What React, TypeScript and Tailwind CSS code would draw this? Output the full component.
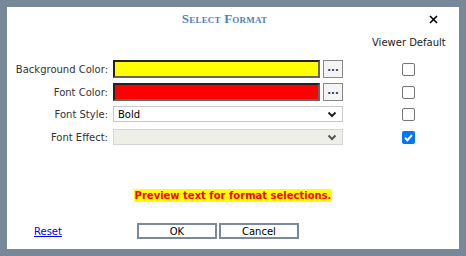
import React from "react";

const Chevron = ({ color }: { color: string }) => (
  <svg width="10" height="7" viewBox="0 0 10 7" className="shrink-0">
    <path d="M1.5 1.5 L5 5 L8.5 1.5" fill="none" stroke={color} strokeWidth="2" />
  </svg>
);

const Box = ({ checked }: { checked?: boolean }) =>
  checked ? (
    <div className="w-[13px] h-[13px] rounded-[2px] bg-[#0075ff] flex items-center justify-center">
      <svg width="11" height="11" viewBox="0 0 11 11">
        <path d="M2 5.8 L4.4 8.2 L9 3" fill="none" stroke="white" strokeWidth="2" />
      </svg>
    </div>
  ) : (
    <div className="w-[13px] h-[13px] rounded-[2px] border border-[#767676] bg-white" />
  );

export default function App() {
  const font = { fontFamily: '"DejaVu Sans", Verdana, sans-serif' };
  return (
    <div className="w-[466px] h-[256px] bg-[#778899] pt-[7px] pl-[7px]">
      <div className="w-[452px] h-[242px] bg-white flex flex-col text-[10px] text-[#333] whitespace-nowrap" style={font}>
        <div className="relative h-[22px] mt-[1px] flex items-center justify-center">
          <span
            className="mr-[17px] text-[13px] font-bold text-[#4f7fba] tracking-[0.2px]"
            style={{ fontFamily: '"Liberation Serif", "DejaVu Serif", serif', fontVariant: "small-caps" }}
          >
            Select Format
          </span>
          <svg width="9" height="9" viewBox="0 0 9 9" className="absolute left-[422px] top-[7px]">
            <path d="M1 1 L8 8 M8 1 L1 8" stroke="black" strokeWidth="1.6" />
          </svg>
        </div>
        <div className="flex h-[20px] items-center mt-[2px]">
          <div className="ml-[365px] text-[#222]">Viewer Default</div>
        </div>
        <div className="mt-[8px] flex flex-col">
          <div className="flex items-center h-[18px]">
            <div className="w-[101px] text-right">Background Color:</div>
            <div className="ml-[5px] w-[207px] h-[18px] bg-[#ffff00] border-2 border-t-[#222] border-l-[#222] border-b-[#666] border-r-[#666]" />
            <div className="ml-[3px] w-[20px] h-[18px] border border-[#888] bg-[#f4f4f4] flex items-center justify-center text-[#1d3b66] text-[10px] font-bold leading-none pb-[2px]">...</div>
            <div className="ml-[59px]"><Box /></div>
          </div>
          <div className="flex items-center h-[18px] mt-[5px]">
            <div className="w-[101px] text-right">Font Color:</div>
            <div className="ml-[5px] w-[207px] h-[18px] bg-[#ff0000] border-2 border-t-[#222] border-l-[#222] border-b-[#666] border-r-[#666]" />
            <div className="ml-[3px] w-[20px] h-[18px] border border-[#888] bg-[#f4f4f4] flex items-center justify-center text-[#1d3b66] text-[10px] font-bold leading-none pb-[2px]">...</div>
            <div className="ml-[59px]"><Box /></div>
          </div>
          <div className="flex items-center h-[16px] mt-[5px]">
            <div className="w-[101px] text-right">Font Style:</div>
            <div className="ml-[5px] w-[230px] h-[16px] border border-[#c8c8c8] bg-white flex items-center justify-between pl-[4px] pr-[5px] text-black">
              <span>Bold</span>
              <Chevron color="#222" />
            </div>
            <div className="ml-[59px]"><Box /></div>
          </div>
          <div className="flex items-center h-[16px] mt-[7px]">
            <div className="w-[101px] text-right">Font Effect:</div>
            <div className="ml-[5px] w-[230px] h-[16px] border border-[#d4d4d0] bg-[#efefe9] flex items-center justify-end pr-[5px]">
              <Chevron color="#555" />
            </div>
            <div className="ml-[59px]"><Box checked /></div>
          </div>
        </div>
        <div className="mt-[44px] flex justify-center">
          <span className="bg-[#ffff00] text-[#ff0000] font-bold px-[1px] leading-[13px]">Preview text for format selections.</span>
        </div>
        <div className="mt-[21px] flex items-center">
          <a href="#" className="ml-[27px] text-[#0000ee] underline">Reset</a>
          <div className="ml-[75px] w-[80px] h-[16px] border-2 border-[#7a8a99] flex items-center justify-center text-black">OK</div>
          <div className="ml-[2px] w-[80px] h-[16px] border-2 border-[#7a8a99] flex items-center justify-center text-black">Cancel</div>
        </div>
      </div>
    </div>
  );
}
